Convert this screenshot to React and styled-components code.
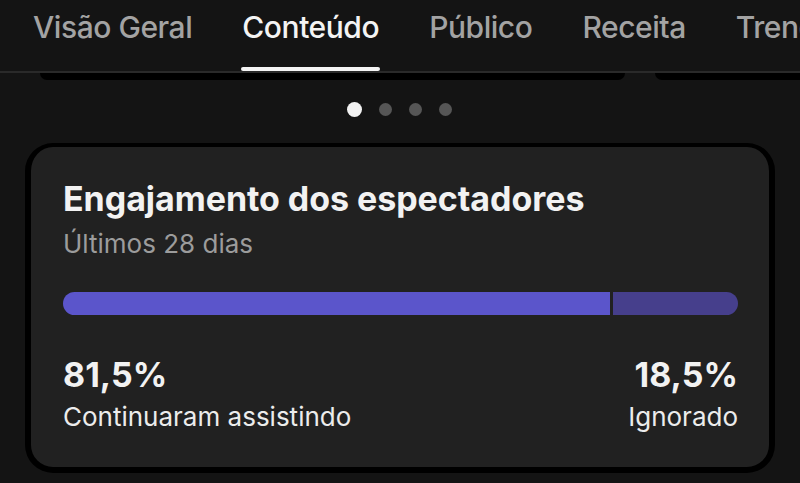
import React from 'react';
import styled, { createGlobalStyle } from 'styled-components';

const GlobalStyle = createGlobalStyle`
    html, body {
        margin: 0;
        padding: 0;
        background: #141414;
        font-family: Inter, "Noto Sans", sans-serif;
        -webkit-font-smoothing: antialiased;
    }
`;

const Page = styled.div`
    width: 800px;
    height: 483px;
    overflow: hidden;
    background: #141414;
`;

const TabBar = styled.div`
    display: flex;
    gap: 50px;
    padding: 0 0 0 33px;
    height: 71px;
    border-bottom: 2px solid #2a2a2a;
    white-space: nowrap;
    overflow: hidden;
`;

const Tab = styled.div`
    position: relative;
    display: flex;
    align-items: center;
    height: 100%;
    padding-bottom: 18px;
    box-sizing: border-box;
    font-size: 30px;
    font-weight: 500;
    letter-spacing: -0.45px;
    color: ${p => (p.active ? '#f4f4f4' : '#a3a3a3')};

    &::after {
        content: '';
        display: ${p => (p.active ? 'block' : 'none')};
        position: absolute;
        left: -1px;
        right: -1px;
        bottom: 0;
        height: 4px;
        border-radius: 2px;
        background: #f4f4f4;
    }
`;

const CardEdges = styled.div`
    display: flex;
    gap: 30px;
    padding-left: 40px;
    height: 7px;
    overflow: hidden;
`;

const CardEdge = styled.div`
    flex: 0 0 ${p => p.w}px;
    height: 7px;
    background: #000;
    border-radius: 0 0 14px 14px;
`;

const Dots = styled.div`
    display: flex;
    justify-content: center;
    align-items: center;
    gap: 17px;
    height: 58px;
    padding-right: 1px;
`;

const Dot = styled.span`
    width: ${p => (p.active ? 15 : 13)}px;
    height: ${p => (p.active ? 15 : 13)}px;
    border-radius: 50%;
    background: ${p => (p.active ? '#f2f2f2' : '#565656')};
`;

const Card = styled.div`
    margin: 5px 25px 0 25px;
    background: #212121;
    border: 6px solid #000;
    border-top-width: 4px;
    border-radius: 28px;
    padding: 32px 31px 0 32px;
    height: 330px;
    box-sizing: border-box;
`;

const Title = styled.div`
    font-size: 34px;
    font-weight: 700;
    letter-spacing: -0.05px;
    color: #f2f2f2;
    line-height: 40px;
`;

const Subtitle = styled.div`
    margin-top: 9px;
    font-size: 26px;
    color: #9c9c9c;
    line-height: 32px;
`;

const Bar = styled.div`
    display: flex;
    gap: 3px;
    height: 23px;
    margin-top: 32px;
    border-radius: 12px;
    overflow: hidden;
`;

const Segment = styled.div`
    background: ${p => p.color};
`;

const Stats = styled.div`
    display: flex;
    justify-content: space-between;
    margin-top: 40px;
`;

const Stat = styled.div`
    display: flex;
    flex-direction: column;
    align-items: ${p => (p.right ? 'flex-end' : 'flex-start')};
`;

const StatValue = styled.div`
    font-size: 34px;
    font-weight: 700;
    color: #f2f2f2;
    line-height: 40px;
`;

const StatLabel = styled.div`
    margin-top: 6px;
    font-size: 26px;
    color: #ececec;
    line-height: 32px;
`;

const tabs = ['Visão Geral', 'Conteúdo', 'Público', 'Receita', 'Trends'];
const kept = 81;

export default function App() {
    return (
        <Page>
            <GlobalStyle />
            <TabBar>
                {tabs.map(t => (
                    <Tab key={t} active={t === 'Conteúdo'}>{t}</Tab>
                ))}
            </TabBar>
            <CardEdges>
                <CardEdge w={585} />
                <CardEdge w={400} />
            </CardEdges>
            <Dots>
                <Dot active />
                <Dot />
                <Dot />
                <Dot />
            </Dots>
            <Card>
                <Title>Engajamento dos espectadores</Title>
                <Subtitle>Últimos 28 dias</Subtitle>
                <Bar>
                    <Segment color="#5b55cb" style={{ width: `${kept}%` }} />
                    <Segment color="#463f8c" style={{ flex: 1 }} />
                </Bar>
                <Stats>
                    <Stat>
                        <StatValue>81,5%</StatValue>
                        <StatLabel>Continuaram assistindo</StatLabel>
                    </Stat>
                    <Stat right>
                        <StatValue>18,5%</StatValue>
                        <StatLabel>Ignorado</StatLabel>
                    </Stat>
                </Stats>
            </Card>
        </Page>
    );
}
